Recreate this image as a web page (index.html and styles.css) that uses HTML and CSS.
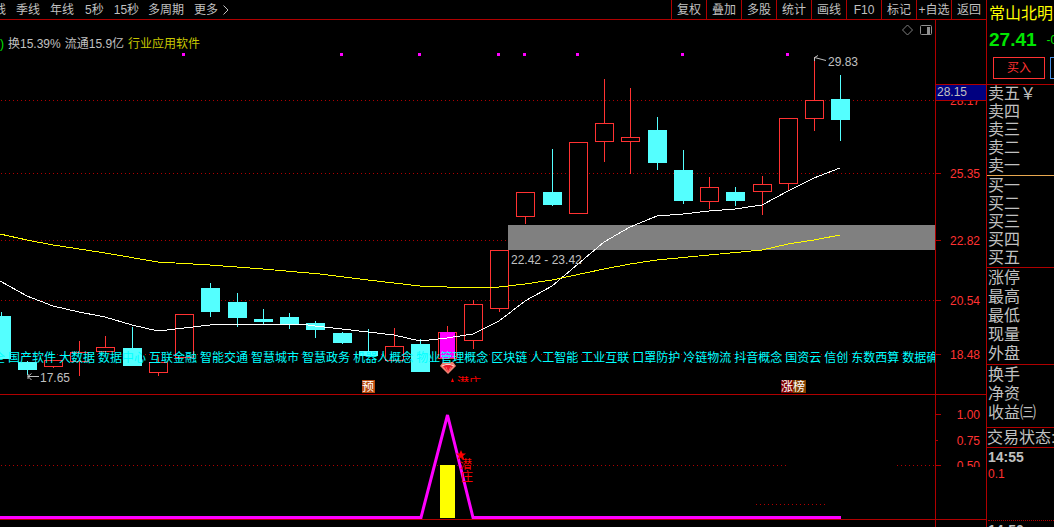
FILE: index.html
```html
<!DOCTYPE html>
<html lang="zh-CN">
<head>
  <meta charset="UTF-8">
  <title>常山北明</title>
  <link rel="stylesheet" href="styles.css">
</head>
<body>
<div class="app">
  <main class="main">
    <header class="toolbar">
      <nav class="periods">
        <button class="period">月线</button>
        <button class="period">季线</button>
        <button class="period">年线</button>
        <button class="period period-sec">5秒</button>
        <button class="period period-sec">15秒</button>
        <button class="period">多周期</button>
        <button class="period">更多<svg class="more" width="6" height="10"><path d="M0.5 0.5L5 5L0.5 9.5"/></svg></button>
      </nav>
      <nav class="tools">
        <button class="tool">复权</button>
        <button class="tool">叠加</button>
        <button class="tool">多股</button>
        <button class="tool">统计</button>
        <button class="tool">画线</button>
        <button class="tool">F10</button>
        <button class="tool">标记</button>
        <button class="tool">+自选</button>
        <button class="tool">返回</button>
      </nav>
    </header>

    <section class="panel panel-price">
      <div class="plot">
        <svg class="canvas" id="price"></svg>
        <div class="plot-head">
          <p class="info"><span class="up">)</span><span>换15.39%</span><span>流通15.9亿</span><span class="industry">行业应用软件</span></p>
          <svg class="tools-icons" width="30" height="12">
            <path class="diamond" d="M0.5 6L5.5 1L10.5 6L5.5 11Z"/>
            <rect class="pane" x="18.5" y="1.5" width="11" height="9" rx="1"/>
            <rect class="pane-fill" x="25" y="3" width="3" height="7"/>
          </svg>
        </div>
        <ul class="concepts">
          <li>全</li><li>国产软件</li><li>大数据</li><li>数据中心</li><li>互联金融</li><li>智能交通</li><li>智慧城市</li><li>智慧政务</li><li>机器人概念</li><li>物业管理概念</li><li>区块链</li><li>人工智能</li><li>工业互联</li><li>口罩防护</li><li>冷链物流</li><li>抖音概念</li><li>国资云</li><li>信创</li><li>东数西算</li><li>数据确权</li>
        </ul>
      </div>
      <svg class="axis" id="priceAxis"></svg>
    </section>

    <section class="panel panel-signal">
      <div class="plot"><svg class="canvas" id="signal"></svg></div>
      <svg class="axis" id="signalAxis"></svg>
    </section>
  </main>

  <aside class="quote">
    <div class="quote-head">
      <h1 class="name">常山北明</h1>
      <p class="last"><b>27.41</b><span>-0.74</span></p>
      <div class="trade">
        <button class="buy">买入</button>
        <button class="sell">卖出</button>
      </div>
    </div>
    <ul class="book book-sell"><li>卖五<span class="yen">￥</span></li><li>卖四</li><li>卖三</li><li>卖二</li><li>卖一</li></ul>
    <ul class="book book-buy"><li>买一</li><li>买二</li><li>买三</li><li>买四</li><li>买五</li></ul>
    <ul class="stats"><li>涨停</li><li>最高</li><li>最低</li><li>现量</li><li>外盘</li></ul>
    <ul class="stats stats-more"><li>换手</li><li>净资</li><li>收益㈢</li></ul>
    <p class="status">交易状态:</p>
    <div class="ticks">
      <b>14:55</b>
      <span class="tick-price">0.1</span>
      <b class="tick-next">14:50</b>
    </div>
  </aside>
</div>

<script src="chart.js"></script>
</body>
</html>
```

FILE: styles.css
```css
body, div, ul, li, p, h1, button {padding:0; margin:0;}
ul {list-style:none;}
button {border:0; background:none; font:inherit; color:inherit; cursor:pointer; white-space:nowrap;}
svg {display:block;}

body {background:#000; color:#c0c0c0; font:12px/16px "Liberation Sans", "Noto Sans CJK SC", sans-serif; overflow:hidden;}
.app {display:grid; grid-template-columns:minmax(0, 1fr) 68px; height:100vh; overflow:hidden;}
.main {display:grid; grid-template-rows:20px 375px minmax(0, 1fr); min-height:0;}

.toolbar {display:flex; justify-content:space-between; box-sizing:border-box; border-bottom:1px solid #b00000;}
.periods {display:flex; align-items:center; gap:10px; margin-left:-18px;}
.period {display:flex; align-items:center; gap:5px;}
.period-sec {margin-left:1px; margin-right:-1px;}
.more path {fill:none; stroke:#c0c0c0;}
.tools {display:flex;}
.tool {width:35px; border-left:1px solid #b00000;}

.panel {display:grid; grid-template-columns:minmax(0, 1fr) 51px; min-height:0;}
.panel-price {box-sizing:border-box; border-bottom:1px solid #b00000;}
.plot {position:relative; overflow:hidden; min-width:0;}
.canvas, .axis {width:100%; height:100%;}
.canvas {position:absolute; top:0; left:0;}
.axis {overflow:hidden;}
.plot-head {position:relative; display:flex; justify-content:space-between; padding:4px 3px 0 0;}
.info {display:flex; gap:4px; padding-top:12px;}
.up {color:#00e600;}
.industry {color:#c8c800;}
.diamond {fill:none; stroke:#808080;}
.pane {fill:none; stroke:#909090;}
.pane-fill {fill:#909090;}
.concepts {position:absolute; top:330px; left:-7px; display:flex; gap:3px; color:#00ffff; white-space:nowrap;}

.grid {stroke:#b00000; stroke-dasharray:1 3;}
.frame {stroke:#b00000;}
.rise {fill:#000; stroke:#ff3232;}
.rise-wick {stroke:#ff3232;}
.fall {fill:#54ffff;}
.fall-wick {stroke:#54ffff;}
.gap {fill:#808080;}
.mark {fill:#ff00ff;}
.ma-white, .ma-yellow {fill:none;}
.ma-white {stroke:#fff;}
.ma-yellow {stroke:#ffff00;}
.arrow {fill:none; stroke:#c0c0c0;}
.note {fill:#c0c0c0;}
.badge {fill:#fff;}
.badge-notice {fill:#b8480c;}
.badge-rise {fill:#800000;}
.badge-rank {fill:#804000;}
.alert {fill:#ff0000;}
.star {fill:#ff0000;}
.scale {fill:#ff3232; text-anchor:end;}
.cursor {fill:#000080;}
.blank {fill:#000;}
.signal-line {fill:none; stroke:#ff00ff; stroke-width:3;}
.signal-bar {fill:#ffff00;}

.quote {display:flex; flex-direction:column; overflow:hidden; border-left:1px solid #b00000; font-size:16px; white-space:nowrap;}
.quote > * {flex:none;}
.quote li {padding-left:1px;}
.quote-head {display:flex; flex-direction:column; height:84px;}
.name {padding:2px 0 0 2px; font-size:16px; font-weight:normal; line-height:24px; color:#ffff00;}
.last {display:flex; gap:10px; padding-left:2px; line-height:28px; font-size:12px; color:#00e600;}
.last b {font-size:19px;}
.trade {display:flex; gap:5px; padding:3px 6px 0;}
.buy, .sell {flex:none; box-sizing:border-box; width:52px; height:22px; font-size:12px; border:1px solid #ff3232; color:#ff3232;}
.sell {border-color:#4a90e2; color:#4a90e2;}
.book {line-height:18px; border-top:1px solid #b00000;}
.book-buy {padding-top:1px; border-color:#e8a850;}
.stats {border-top:1px solid #b00000; line-height:19px; padding-bottom:1px;}
.stats-more {padding-bottom:5px;}
.status {border-top:1px solid #b00000; border-bottom:1px solid #b00000; line-height:19px;}
.ticks {display:flex; flex-direction:column; padding-left:1px; font-size:14px;}
.ticks b {line-height:18px;}
.tick-price {font-size:12px; line-height:16px; color:#ff3232;}
.tick-next {margin-top:38px; border-top:1px dotted #b00000;}
```

FILE: chart.js
```js
// x, open/close top, bottom, wick top, wick bottom
var rise = [
  [53, 360, 366, 360, 367], [79, 352, 361, 341, 375], [105, 347, 351, 336, 351],
  [158, 362, 372, 357, 375], [184, 314, 357, 314, 357], [394, 346, 360, 328, 360],
  [447, 332, 358, 326, 358], [473, 304, 340, 300, 348], [499, 250, 308, 250, 311],
  [525, 192, 216, 192, 223], [578, 142, 213, 142, 213], [604, 123, 141, 79, 161],
  [630, 137, 141, 88, 173], [709, 187, 201, 177, 208], [762, 184, 191, 176, 214],
  [788, 118, 183, 118, 190], [814, 100, 118, 57, 130]
];
var fall = [
  [1, 316, 359, 312, 359], [27, 362, 370, 361, 375], [132, 348, 366, 327, 366],
  [210, 288, 312, 283, 317], [237, 302, 318, 293, 327], [263, 319, 322, 309, 324],
  [289, 317, 325, 313, 329], [315, 323, 330, 321, 338], [342, 333, 343, 332, 344],
  [368, 351, 356, 329, 356], [420, 344, 372, 339, 372], [552, 192, 205, 149, 206],
  [657, 130, 163, 117, 170], [683, 170, 201, 150, 204], [735, 192, 201, 187, 206],
  [840, 99, 120, 75, 141]
];
var marks = [183, 341, 419, 498, 524, 577, 682, 787];
var white = '0,281 27,296 53,306 79,312 105,317 132,325 158,331 184,328 210,325 237,324 300,324 315,326 342,329 368,332 394,335 420,341 447,338 473,334 499,321 525,301 552,286 578,264 604,242 630,227 657,216 683,214 709,211 735,209 762,205 788,191 814,178 840,168';
var yellow = '0,234 27,240 53,245 105,253 158,262 210,265 263,269 320,274 368,280 420,286 473,288 499,287 525,284 552,280 604,269 630,264 657,260 709,255 762,250 788,244 814,240 840,235';

function line(cls, x1, y1, x2, y2) {
  return '<line class="' + cls + '" x1="' + x1 + '" y1="' + y1 + '" x2="' + x2 + '" y2="' + y2 + '"/>';
}
function rect(cls, x, y, w, h) {
  return '<rect class="' + cls + '" x="' + x + '" y="' + y + '" width="' + w + '" height="' + h + '"/>';
}
function text(cls, x, y, str) {
  return '<text class="' + cls + '" x="' + x + '" y="' + y + '">' + str + '</text>';
}
function path(cls, d) {
  return '<path class="' + cls + '" d="' + d + '"/>';
}

function drawPrice() {
  var s = '<g transform="translate(0,-20)">';
  [100, 173, 240, 300, 354].forEach(function (y) {
    s += line('grid', 1, y + 0.5, '100%', y + 0.5);
  });
  s += rect('gap', 508, 225, '100%', 25);
  rise.forEach(function (c) {
    s += line('rise-wick', c[0] + 0.5, c[3], c[0] + 0.5, c[4] + 1);
    s += rect('rise', c[0] - 8.5, c[1] + 0.5, 18, c[2] - c[1]);
  });
  fall.forEach(function (c) {
    s += line('fall-wick', c[0] + 0.5, c[3], c[0] + 0.5, c[4]);
    s += rect('fall', c[0] - 9, c[1], 19, c[2] - c[1]);
  });
  s += rect('mark', 440, 332, 15, 26);
  marks.forEach(function (x) {
    s += rect('mark', x - 1, 53, 3, 3);
  });
  s += '<g shape-rendering="crispEdges"><polyline class="ma-white" points="' + white + '"/>';
  s += '<polyline class="ma-yellow" points="' + yellow + '"/></g>';
  s += path('arrow', 'M826 60.5L814.5 57.5M814.5 61V57.5L818 55.5');
  s += text('note', 828, 66, '29.83');
  s += path('arrow', 'M39 376.5H28M31.5 373.5L28 376.5L31.5 380M28 374V379');
  s += text('note', 40, 382, '17.65');
  s += text('note', 511, 264, '22.42 - 23.42');
  s += rect('badge-notice', 362, 380, 13, 13) + text('badge', 362, 391, '预');
  s += rect('badge-rise', 781, 380, 12, 13) + rect('badge-rank', 793, 380, 13, 13) + text('badge', 781, 391, '涨榜');
  // ruby under the signal candle
  s += '<g><path d="M440 366L443 362H453L456 366L448 374Z" fill="#f08070"/>';
  s += '<path d="M443 366L445 364H451L453 366L448 372Z" fill="#e81828"/>';
  s += '<path d="M442 366L446 364.5H450L454 366" fill="none" stroke="#ffd0c8"/>';
  s += '<path d="M446 367L448 372L451 367" fill="none" stroke="#ff6060"/></g>';
  s += '<svg x="450" y="376" width="34" height="6">' + path('star', 'M2.5 2L4 6H1Z') + text('alert', 7, 11, '潜庄') + '</svg>';
  document.getElementById('price').innerHTML = s + '</g>';

  s = '<g transform="translate(0,-20)">' + line('frame', 0.5, 20, 0.5, 395);
  [['28.17', 100], ['25.35', 173], ['22.82', 240], ['20.54', 300], ['18.48', 354]].forEach(function (t) {
    s += line('frame', 0, t[1] + 0.5, 6, t[1] + 0.5) + text('scale', 45, t[1] + 5, t[0]);
  });
  s += rect('cursor', 1, 84, 50, 16) + line('frame', 0, 84.5, 51, 84.5) + line('frame', 0, 100.5, 51, 100.5);
  s += text('note', 2, 96, '28.15');
  document.getElementById('priceAxis').innerHTML = s + '</g>';
}

function drawSignal() {
  var s = '<g transform="translate(0,-395)">';
  s += line('grid', 1, 465.5, 786, 465.5) + line('grid', 897, 465.5, '100%', 465.5);
  s += line('grid', 756, 504.5, 826, 504.5);
  s += line('frame', 0, 519.5, '100%', 519.5);
  s += rect('signal-bar', 440, 465, 15, 53);
  s += '<polyline class="signal-line" points="0,517.5 421,517.5 447.5,415 473,517.5 841,517.5"/>';
  s += path('star', 'M461 450L462.5 453.5H466L463 456L464.5 460L461 457.5L457.5 460L459 456L456 453.5H459.5Z');
  s += text('alert', 460, 469, '潜') + text('alert', 461, 481, '庄');
  document.getElementById('signal').innerHTML = s + '</g>';

  s = '<g transform="translate(0,-395)">' + line('frame', 0.5, 395, 0.5, 527) + line('frame', 0, 519.5, 51, 519.5);
  [['1.00', 414, 6], ['0.75', 440, 3], ['0.50', 465, 6]].forEach(function (t) {
    s += line('frame', 0, t[1] + 0.5, t[2], t[1] + 0.5) + text('scale', 45, t[1] + 5, t[0]);
  });
  s += rect('blank', 4, 467, 47, 28);
  document.getElementById('signalAxis').innerHTML = s + '</g>';
}

drawPrice();
drawSignal();
```
